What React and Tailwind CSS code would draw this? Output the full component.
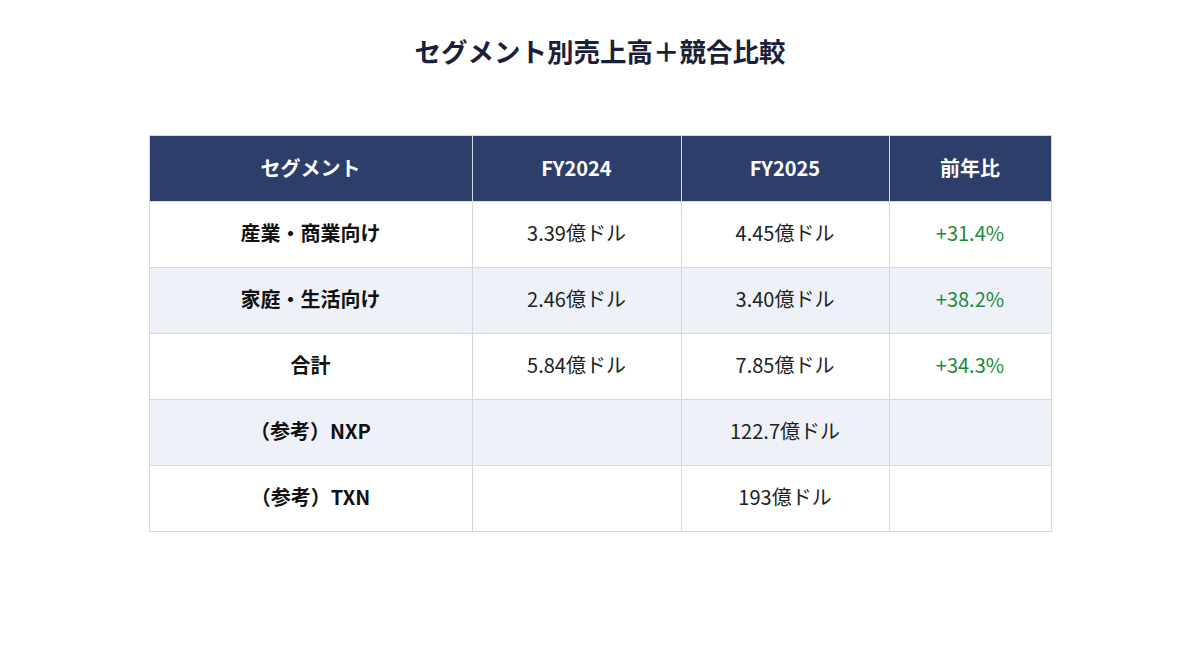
import React from "react";

const rows = [
  { seg: "産業・商業向け", a: "3.39億ドル", b: "4.45億ドル", c: "+31.4%" },
  { seg: "家庭・生活向け", a: "2.46億ドル", b: "3.40億ドル", c: "+38.2%" },
  { seg: "合計", a: "5.84億ドル", b: "7.85億ドル", c: "+34.3%" },
  { seg: "（参考）NXP", a: "", b: "122.7億ドル", c: "" },
  { seg: "（参考）TXN", a: "", b: "193億ドル", c: "" },
];

export default function App() {
  return (
    <div
      className="w-[1200px] h-[666px] bg-white flex flex-col items-center"
      style={{ fontFamily: '"Noto Sans CJK JP", "Noto Sans", sans-serif' }}
    >
      <h1 className="mt-[32px] text-[26.5px] leading-[38px] font-bold text-[#1c1f3a]">
        セグメント別売上高＋競合比較
      </h1>
      <table className="mt-[65px] w-[902px] table-fixed border-collapse text-[20px]">
        <colgroup>
          <col className="w-[323px]" />
          <col className="w-[209px]" />
          <col className="w-[208px]" />
          <col className="w-[162px]" />
        </colgroup>
        <thead>
          <tr className="h-[66px] bg-[#2c3e69] text-white font-bold">
            <th className="border border-[#d4d7de] font-bold pb-[2px]">セグメント</th>
            <th className="border border-[#d4d7de] font-bold pb-[2px]">FY2024</th>
            <th className="border border-[#d4d7de] font-bold pb-[2px]">FY2025</th>
            <th className="border border-[#d4d7de] font-bold pb-[2px]">前年比</th>
          </tr>
        </thead>
        <tbody>
          {rows.map((r, i) => (
            <tr key={i} className={`h-[66px] ${i % 2 === 1 ? "bg-[#eef2f8]" : "bg-white"}`}>
              <td className="border border-[#d4d7de] text-center font-bold text-[#111] pb-[4px]">{r.seg}</td>
              <td className="border border-[#d4d7de] text-center text-[#222] pb-[4px]">{r.a}</td>
              <td className="border border-[#d4d7de] text-center text-[#222] pb-[4px]">{r.b}</td>
              <td className="border border-[#d4d7de] text-center text-[#1e8a3c] pb-[4px]">{r.c}</td>
            </tr>
          ))}
        </tbody>
      </table>
    </div>
  );
}
